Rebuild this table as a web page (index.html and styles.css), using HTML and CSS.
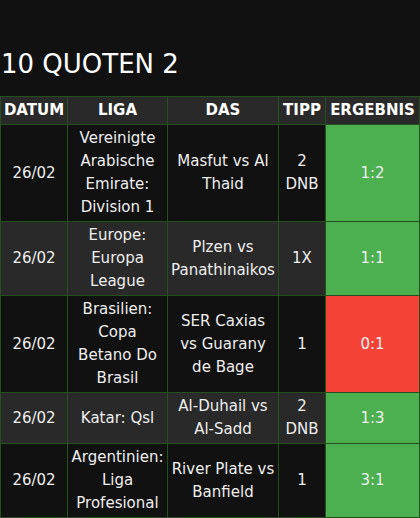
FILE: index.html
```html
<!DOCTYPE html>
<html lang="de">
<head>
<meta charset="utf-8">
<link rel="stylesheet" href="styles.css">
</head>
<body>
<h2 class="title">10 QUOTEN 2</h2>
<table class="tips">
<colgroup>
<col class="c-date"><col class="c-liga"><col class="c-das"><col class="c-tipp"><col class="c-erg">
</colgroup>
<thead>
<tr><th>DATUM</th><th>LIGA</th><th>DAS</th><th>TIPP</th><th>ERGEBNIS</th></tr>
</thead>
<tbody>
<tr><td>26/02</td><td>Vereinigte Arabische Emirate: Division 1</td><td>Masfut vs Al Thaid</td><td>2 DNB</td><td class="win">1:2</td></tr>
<tr class="alt"><td>26/02</td><td>Europe: Europa League</td><td>Plzen vs Panathinaikos</td><td>1X</td><td class="win">1:1</td></tr>
<tr><td>26/02</td><td>Brasilien: Copa Betano Do Brasil</td><td>SER Caxias vs Guarany de Bage</td><td>1</td><td class="loss">0:1</td></tr>
<tr class="alt"><td>26/02</td><td>Katar: Qsl</td><td>Al-Duhail vs Al-Sadd</td><td>2 DNB</td><td class="win">1:3</td></tr>
<tr><td>26/02</td><td>Argentinien: Liga Profesional</td><td>River Plate vs Banfield</td><td>1</td><td class="win">3:1</td></tr>
<tr class="alt"><td>26/02</td><td>Spanien: Segunda Division</td><td>Real Oviedo vs Racing Santander</td><td>1X</td><td class="win">2:0</td></tr>
</tbody>
</table>
</body>
</html>
```
FILE: styles.css
```css
html, body {
  margin: 0;
  padding: 0;
  background: #111111;
  color: #ffffff;
  font-family: "DejaVu Sans", Verdana, sans-serif;
}
.title {
  margin: 49px 0 17px 1px;
  font-size: 26px;
  line-height: 30px;
  font-weight: normal;
}
.tips {
  border-collapse: collapse;
  table-layout: fixed;
  width: 419px;
  font-size: 15px;
  line-height: 23px;
}
.c-date { width: 67px; }
.c-liga { width: 100px; }
.c-das { width: 111px; }
.c-tipp { width: 47px; }
.c-erg { width: 94px; }
.tips th, .tips td {
  border: 1px solid #24501d;
  padding: 2px 3px;
  text-align: center;
  vertical-align: middle;
}
.tips th {
  padding: 2px 1px;
  background: #292929;
  font-weight: bold;
}
.tips td {
  color: #eeeeee;
}
.tips tr.alt td {
  background: #292929;
}
.tips td.win, .tips tr.alt td.win {
  background: #4caf50;
}
.tips td.loss, .tips tr.alt td.loss {
  background: #f44336;
}
```
